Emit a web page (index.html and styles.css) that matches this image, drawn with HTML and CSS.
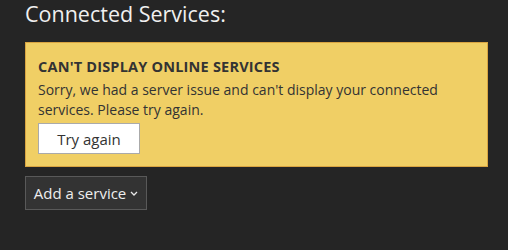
FILE: index.html
```html
<!DOCTYPE html>
<html>
<head>
<meta charset="utf-8">
<link rel="stylesheet" href="styles.css">
</head>
<body>
<div class="page">
  <h1 class="title">Connected Services:</h1>
  <div class="notice">
    <div class="notice-title">CAN'T DISPLAY ONLINE SERVICES</div>
    <p class="notice-text">Sorry, we had a server issue and can't display your connected services. Please try again.</p>
    <button class="retry">Try again</button>
  </div>
  <button class="add">Add a service <svg class="chev" width="8" height="5" viewBox="0 0 8 5"><path d="M1 1 L4 4 L7 1" fill="none" stroke="#e8e8e8" stroke-width="1.3"/></svg></button>
</div>
</body>
</html>
```
FILE: styles.css
```css
html, body {
  margin: 0;
  padding: 0;
  background: #252525;
  font-family: "Open Sans", "Noto Sans", sans-serif;
}
.page {
  padding: 0 20px 0 25px;
  display: flex;
  flex-direction: column;
  align-items: flex-start;
}
.title {
  margin: 0;
  font-weight: 400;
  font-size: 21.5px;
  line-height: 28px;
  color: #f0f0f0;
  height: 42px;
  box-sizing: border-box;
  padding-top: 0;
}
.notice {
  width: 463px;
  box-sizing: border-box;
  background: #f0cf65;
  border: 1px solid #d9a441;
  padding: 14px 12px 12px 12px;
  color: #333;
}
.notice-title {
  font-weight: 700;
  font-size: 14.5px;
  letter-spacing: 0.2px;
  line-height: 20px;
}
.notice-text {
  margin: 3px 0 0 0;
  font-size: 14px;
  line-height: 20px;
  width: 420px;
}
.retry {
  margin-top: 3px;
  width: 102px;
  height: 31px;
  background: #fff;
  border: 1px solid #aaa;
  font-family: inherit;
  font-size: 15px;
  color: #333;
  padding: 0;
}
.add {
  margin-top: 9px;
  width: 122px;
  height: 34px;
  background: #333;
  border: 1px solid #595959;
  color: #eee;
  font-family: inherit;
  font-size: 15px;
  padding: 0;
  display: flex;
  align-items: center;
  justify-content: center;
  gap: 4px;
}
.chev { margin-top: 1px; }
```
